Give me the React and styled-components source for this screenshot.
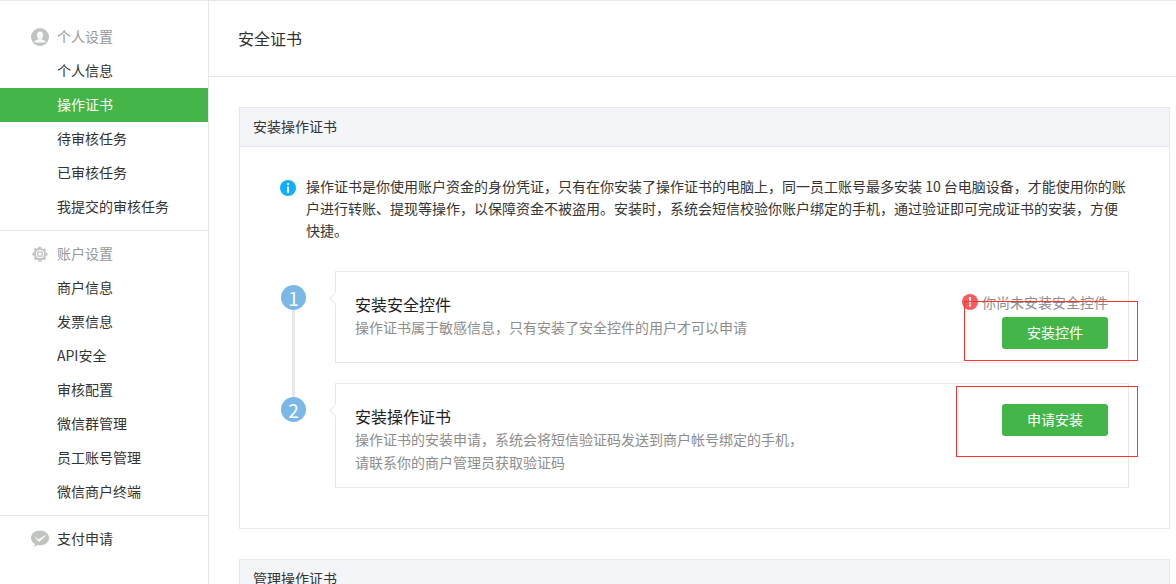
import React from "react";
import styled, { createGlobalStyle } from "styled-components";

const GlobalStyle = createGlobalStyle`
  html, body {
    margin: 0;
    padding: 0;
    height: 584px;
    overflow: hidden;
    background: #fff;
    font-family: "Noto Sans CJK SC", "Noto Sans", sans-serif;
    font-size: 14px;
    color: #333;
  }
  * {
    box-sizing: border-box;
  }
`;

const Page = styled.div`
  display: flex;
  width: 1176px;
  height: 584px;
  overflow: hidden;
  border-top: 1px solid #e7e7eb;
`;

const Sidebar = styled.aside`
  flex: 0 0 209px;
  border-right: 1px solid #e7e7eb;
  padding-top: 19px;
`;

const NavGroup = styled.div`
  padding: ${(props) => (props.$first ? "0" : "6px")} 0 6px;
  border-bottom: ${(props) => (props.$last ? "none" : "1px solid #e7e7eb")};
`;

const NavHead = styled.div`
  display: flex;
  align-items: center;
  height: 34px;
  padding: 0 0 2px 31px;
  color: ${(props) => (props.$link ? "#333" : "#999")};
`;

const NavIcon = styled.svg`
  width: 18px;
  height: 18px;
  margin: 2px 8px 0 0;
  flex: none;
`;

const NavItem = styled.div`
  height: 34px;
  line-height: 32px;
  padding-left: 57px;
  color: ${(props) => (props.$active ? "#fff" : "#333")};
  background: ${(props) => (props.$active ? "#44b549" : "transparent")};
`;

const Main = styled.main`
  flex: 1;
  min-width: 0;
`;

const PageHead = styled.header`
  height: 76px;
  line-height: 74px;
  padding-left: 29px;
  font-size: 16px;
  border-bottom: 1px solid #e7e7eb;
  color: #333;
`;

const Content = styled.div`
  padding: 30px 6px 0 30px;
`;

const Panel = styled.section`
  border: 1px solid #e7e7eb;
  margin-bottom: 30px;
`;

const PanelHead = styled.div`
  height: 39px;
  line-height: 37px;
  padding-left: 13px;
  font-size: 14px;
  background: #f4f5f9;
  border-bottom: 1px solid #e7e7eb;
`;

const PanelBody = styled.div`
  padding: 28px 40px 40px;
`;

const Intro = styled.div`
  display: flex;
  margin-bottom: 30px;
`;

const InfoIcon = styled.svg`
  width: 16px;
  height: 16px;
  margin: 5px 10px 0 0;
  flex: none;
`;

const IntroText = styled.p`
  margin: 0;
  width: 830px;
  font-size: 14px;
  line-height: 22px;
  color: #353535;
`;

const Steps = styled.div`
  display: flex;
  flex-direction: column;
  gap: 20px;
`;

const Step = styled.div`
  position: relative;
  display: flex;
  align-items: flex-start;
  padding-left: 55px;

  &:not(:last-child)::before {
    content: "";
    position: absolute;
    left: 12px;
    top: 39px;
    width: 3px;
    height: 87px;
    background: #e7e7eb;
  }
`;

const Badge = styled.div`
  position: absolute;
  left: 1px;
  top: 14px;
  width: 25px;
  height: 25px;
  border-radius: 50%;
  background: #7ab8e8;
  color: #fff;
  font-size: 19px;
  line-height: 25px;
  text-align: center;
`;

const Card = styled.div`
  position: relative;
  flex: 1;
  display: flex;
  justify-content: space-between;
  min-height: ${(props) => props.$height}px;
  padding: 0 20px 0 19px;
  border: 1px solid #e7e7eb;
  background: #fff;

  &::before {
    content: "";
    position: absolute;
    left: -5px;
    top: 22px;
    width: 8px;
    height: 8px;
    background: #fff;
    border-left: 1px solid #e7e7eb;
    border-bottom: 1px solid #e7e7eb;
    transform: rotate(45deg);
  }
`;

const StepCopy = styled.div`
  padding-top: 22px;
`;

const StepTitle = styled.h3`
  margin: 0 0 2px;
  font-size: 16px;
  font-weight: 400;
  line-height: 20px;
  color: #222;
`;

const StepDesc = styled.p`
  margin: 0;
  font-size: 14px;
  line-height: 23px;
  color: #8d8d8d;
`;

const Warning = styled.div`
  position: absolute;
  right: 20px;
  top: 20px;
  display: flex;
  align-items: center;
  font-size: 14px;
  line-height: 20px;
  color: #8d8d8d;
`;

const WarnIcon = styled.svg`
  width: 16px;
  height: 16px;
  margin-right: 4px;
`;

const Button = styled.button`
  width: 106px;
  height: 32px;
  margin-top: ${(props) => props.$top}px;
  padding: 0 0 2px;
  border: none;
  border-radius: 3px;
  background: #44b549;
  color: #fff;
  font-family: inherit;
  font-size: 14px;
  cursor: pointer;
`;

const RedMark = styled.div`
  position: absolute;
  top: ${(props) => props.$top}px;
  left: ${(props) => props.$left}px;
  width: ${(props) => props.$width}px;
  height: ${(props) => props.$height}px;
  border: 1px solid #f33;
  pointer-events: none;
`;

const PersonIcon = () => (
  <NavIcon viewBox="0 0 18 18">
    <circle cx="9" cy="9" r="9" fill="#bfc4c0" />
    <ellipse cx="9" cy="7.200" rx="3" ry="3.700" fill="#fff" />
    <path d="M3.500 14.500c0-2 2.600-2.500 4-3.200h3c1.400.7 4 1.200 4 3.200z" fill="#fff" />
  </NavIcon>
);

const GearIcon = () => (
  <NavIcon viewBox="0 0 18 18">
    <path
      d="M9 2.200l1.300.1.500 1.700 1.300.6 1.600-.8 1.500 1.500-.8 1.600.6 1.300 1.700.5v2.100l-1.700.5-.6 1.300.8 1.600-1.500 1.500-1.600-.8-1.300.6-.5 1.700H7.700l-.5-1.700-1.300-.6-1.600.8-1.500-1.500.8-1.600-.6-1.300-1.700-.5V8.200l1.700-.5.6-1.300-.8-1.600 1.500-1.500 1.600.8 1.300-.6.5-1.700z"
      fill="#c4c7c5"
      transform="translate(0 -.5)"
    />
    <circle cx="9" cy="9" r="4" fill="#fff" />
    <circle cx="9" cy="9" r="2.400" fill="none" stroke="#c4c7c5" strokeWidth="1.400" />
  </NavIcon>
);

const PayIcon = () => (
  <NavIcon viewBox="0 0 18 18">
    <path d="M9 .5c5 0 9 3.200 9 7.400s-4 7.400-9 7.400c-.9 0-1.700-.1-2.500-.3L3.500 17l.4-3C1.500 12.700 0 10.500 0 7.900 0 3.700 4 .5 9 .5z" fill="#bfc4c0" />
    <path d="M4.500 7.300l2.900 2.500 6.900-4.200-6.300 6z" fill="#fff" stroke="#fff" strokeWidth=".8" strokeLinejoin="round" />
  </NavIcon>
);

const personalLinks = [
  { label: "个人信息" },
  { label: "操作证书", active: true },
  { label: "待审核任务" },
  { label: "已审核任务" },
  { label: "我提交的审核任务" },
];

const accountLinks = [
  "商户信息",
  "发票信息",
  "API安全",
  "审核配置",
  "微信群管理",
  "员工账号管理",
  "微信商户终端",
];

const App = () => {
  return (
    <>
      <GlobalStyle />
      <Page>
        <Sidebar>
          <NavGroup $first>
            <NavHead>
              <PersonIcon />
              个人设置
            </NavHead>
            {personalLinks.map((link) => (
              <NavItem key={link.label} $active={link.active}>
                {link.label}
              </NavItem>
            ))}
          </NavGroup>
          <NavGroup>
            <NavHead>
              <GearIcon />
              账户设置
            </NavHead>
            {accountLinks.map((label) => (
              <NavItem key={label}>{label}</NavItem>
            ))}
          </NavGroup>
          <NavGroup $last>
            <NavHead $link>
              <PayIcon />
              支付申请
            </NavHead>
          </NavGroup>
        </Sidebar>
        <Main>
          <PageHead>安全证书</PageHead>
          <Content>
            <Panel>
              <PanelHead>安装操作证书</PanelHead>
              <PanelBody>
                <Intro>
                  <InfoIcon viewBox="0 0 16 16">
                    <circle cx="8" cy="8" r="8" fill="#10aeff" />
                    <rect x="7" y="3" width="2" height="2" fill="#fff" />
                    <rect x="7" y="6.500" width="2" height="6.500" fill="#fff" />
                  </InfoIcon>
                  <IntroText>
                    操作证书是你使用账户资金的身份凭证，只有在你安装了操作证书的电脑上，同一员工账号最多安装 10 台电脑设备，才能使用你的账户进行转账、提现等操作，以保障资金不被盗用。安装时，系统会短信校验你账户绑定的手机，通过验证即可完成证书的安装，方便快捷。
                  </IntroText>
                </Intro>
                <Steps>
                  <Step>
                    <Badge>1</Badge>
                    <Card $height={92}>
                      <StepCopy>
                        <StepTitle>安装安全控件</StepTitle>
                        <StepDesc>操作证书属于敏感信息，只有安装了安全控件的用户才可以申请</StepDesc>
                      </StepCopy>
                      <Warning>
                        <WarnIcon viewBox="0 0 16 16">
                          <circle cx="8" cy="8" r="8" fill="#fa5a5a" />
                          <rect x="7" y="3" width="2" height="6.500" fill="#fff" />
                          <rect x="7" y="10.500" width="2" height="2" fill="#fff" />
                        </WarnIcon>
                        你尚未安装安全控件
                      </Warning>
                      <Button $top={45}>安装控件</Button>
                      <RedMark $top={29} $left={628} $width={174} $height={60} />
                    </Card>
                  </Step>
                  <Step>
                    <Badge>2</Badge>
                    <Card $height={105}>
                      <StepCopy>
                        <StepTitle>安装操作证书</StepTitle>
                        <StepDesc>
                          操作证书的安装申请，系统会将短信验证码发送到商户帐号绑定的手机，
                          <br />
                          请联系你的商户管理员获取验证码
                        </StepDesc>
                      </StepCopy>
                      <Button $top={20}>申请安装</Button>
                      <RedMark $top={2} $left={620} $width={182} $height={71} />
                    </Card>
                  </Step>
                </Steps>
              </PanelBody>
            </Panel>
            <Panel>
              <PanelHead>管理操作证书</PanelHead>
            </Panel>
          </Content>
        </Main>
      </Page>
    </>
  );
};

export default App;
